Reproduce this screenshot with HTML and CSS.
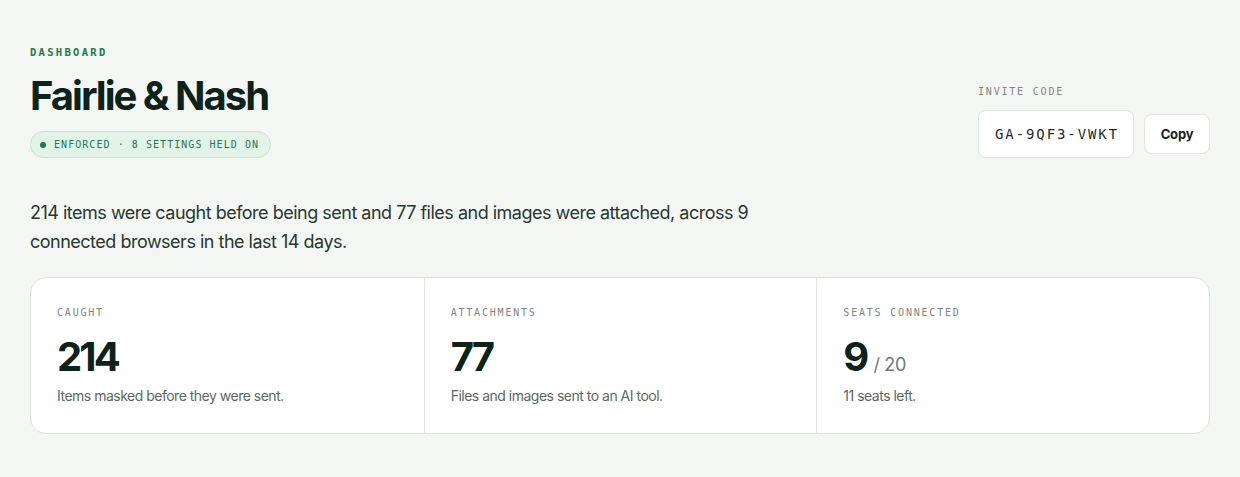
FILE: index.html
```html
<!DOCTYPE html>
<html>
<head>
<meta charset="utf-8">
<link rel="stylesheet" href="styles.css">
</head>
<body>
<main class="page">
  <header class="head">
    <div class="head-left">
      <div class="eyebrow">DASHBOARD</div>
      <h1 class="title">Fairlie &amp; Nash</h1>
      <div class="badge"><span class="dot"></span>ENFORCED · 8 SETTINGS HELD ON</div>
    </div>
    <div class="invite">
      <div class="label">INVITE CODE</div>
      <div class="invite-row">
        <div class="code">GA-9QF3-VWKT</div>
        <button class="copy">Copy</button>
      </div>
    </div>
  </header>
  <p class="summary">214 items were caught before being sent and 77 files and images were attached, across 9 connected browsers in the last 14 days.</p>
  <section class="stats">
    <div class="stat">
      <div class="label">CAUGHT</div>
      <div class="num">214</div>
      <div class="desc">Items masked before they were sent.</div>
    </div>
    <div class="stat">
      <div class="label">ATTACHMENTS</div>
      <div class="num">77</div>
      <div class="desc">Files and images sent to an AI tool.</div>
    </div>
    <div class="stat">
      <div class="label">SEATS CONNECTED</div>
      <div class="num">9<span class="of">/ 20</span></div>
      <div class="desc">11 seats left.</div>
    </div>
  </section>
</main>
</body>
</html>
```
FILE: styles.css
```css
* { box-sizing: border-box; }
html, body { margin: 0; padding: 0; }
body {
  background: #f4f6f3;
  font-family: Inter, "Noto Sans", sans-serif;
  color: #0f2219;
  width: 1240px;
  height: 477px;
  overflow: hidden;
}
.page { padding: 45px 30px 0 30px; }
.head { display: flex; justify-content: space-between; align-items: flex-start; }
.eyebrow {
  font-family: "DejaVu Sans Mono", monospace;
  font-size: 10.5px;
  letter-spacing: 2.3px;
  color: #237a47;
  font-weight: 600;
  line-height: 14px;
}
.title {
  margin: 13px 0 0 0;
  font-size: 40px;
  font-weight: 700;
  letter-spacing: -2px;
  line-height: 48px;
  color: #0d2219;
}
.badge {
  margin-top: 11px;
  display: inline-flex;
  align-items: center;
  height: 27px;
  padding: 0 11px 0 9px;
  border-radius: 14px;
  background: #e2f4e7;
  border: 1px solid #bfe5cb;
  font-family: "DejaVu Sans Mono", monospace;
  font-size: 10px;
  letter-spacing: 1.05px;
  color: #237a47;
}
.dot {
  width: 6px; height: 6px; border-radius: 50%;
  background: #1c7a45;
  margin-right: 8px;
}
.invite { margin-top: 41px; }
.label {
  font-family: "DejaVu Sans Mono", monospace;
  font-size: 10px;
  letter-spacing: 1.8px;
  color: #7c8880;
  line-height: 12px;
}
.invite-row { display: flex; align-items: center; gap: 10px; margin-top: 12px; }
.code {
  height: 48px;
  width: 156px;
  display: flex; align-items: center; justify-content: center;
  background: #fff;
  border: 1px solid #dfe5df;
  border-radius: 8px;
  font-family: "DejaVu Sans Mono", monospace;
  font-size: 14px;
  letter-spacing: 1.9px;
  color: #1c2b23;
  padding-left: 2px;
}
.copy {
  height: 40px;
  width: 66px;
  background: #fff;
  border: 1px solid #dfe5df;
  border-radius: 8px;
  font-family: Inter, sans-serif;
  font-size: 13px;
  font-weight: 700;
  letter-spacing: -0.2px;
  color: #14241b;
  padding: 0;
}
.summary {
  margin: 40px 0 0 0;
  max-width: 800px;
  font-size: 18px;
  line-height: 29px;
  letter-spacing: -0.5px;
  color: #27382e;
}
.stats {
  margin-top: 21px;
  display: grid;
  grid-template-columns: 1fr 1fr 1fr;
  background: #fff;
  border: 1px solid #dbe2dc;
  border-radius: 16px;
  height: 157px;
}
.stat { padding: 29px 27px 0 26px; }
.stat + .stat { border-left: 1px solid #e3e8e3; }
.num {
  display: flex;
  align-items: baseline;
  margin-top: 14px;
  font-size: 40px;
  font-weight: 700;
  letter-spacing: -2.9px;
  line-height: 48px;
  height: 48px;
  color: #0d2219;
}
.of {
  font-size: 18px;
  line-height: 1;
  font-weight: 400;
  letter-spacing: -0.3px;
  color: #6c7a72;
  margin-left: 7px;
}
.desc {
  margin-top: 5px;
  font-size: 14px;
  letter-spacing: -0.5px;
  color: #5b6860;
  line-height: 20px;
}
```
